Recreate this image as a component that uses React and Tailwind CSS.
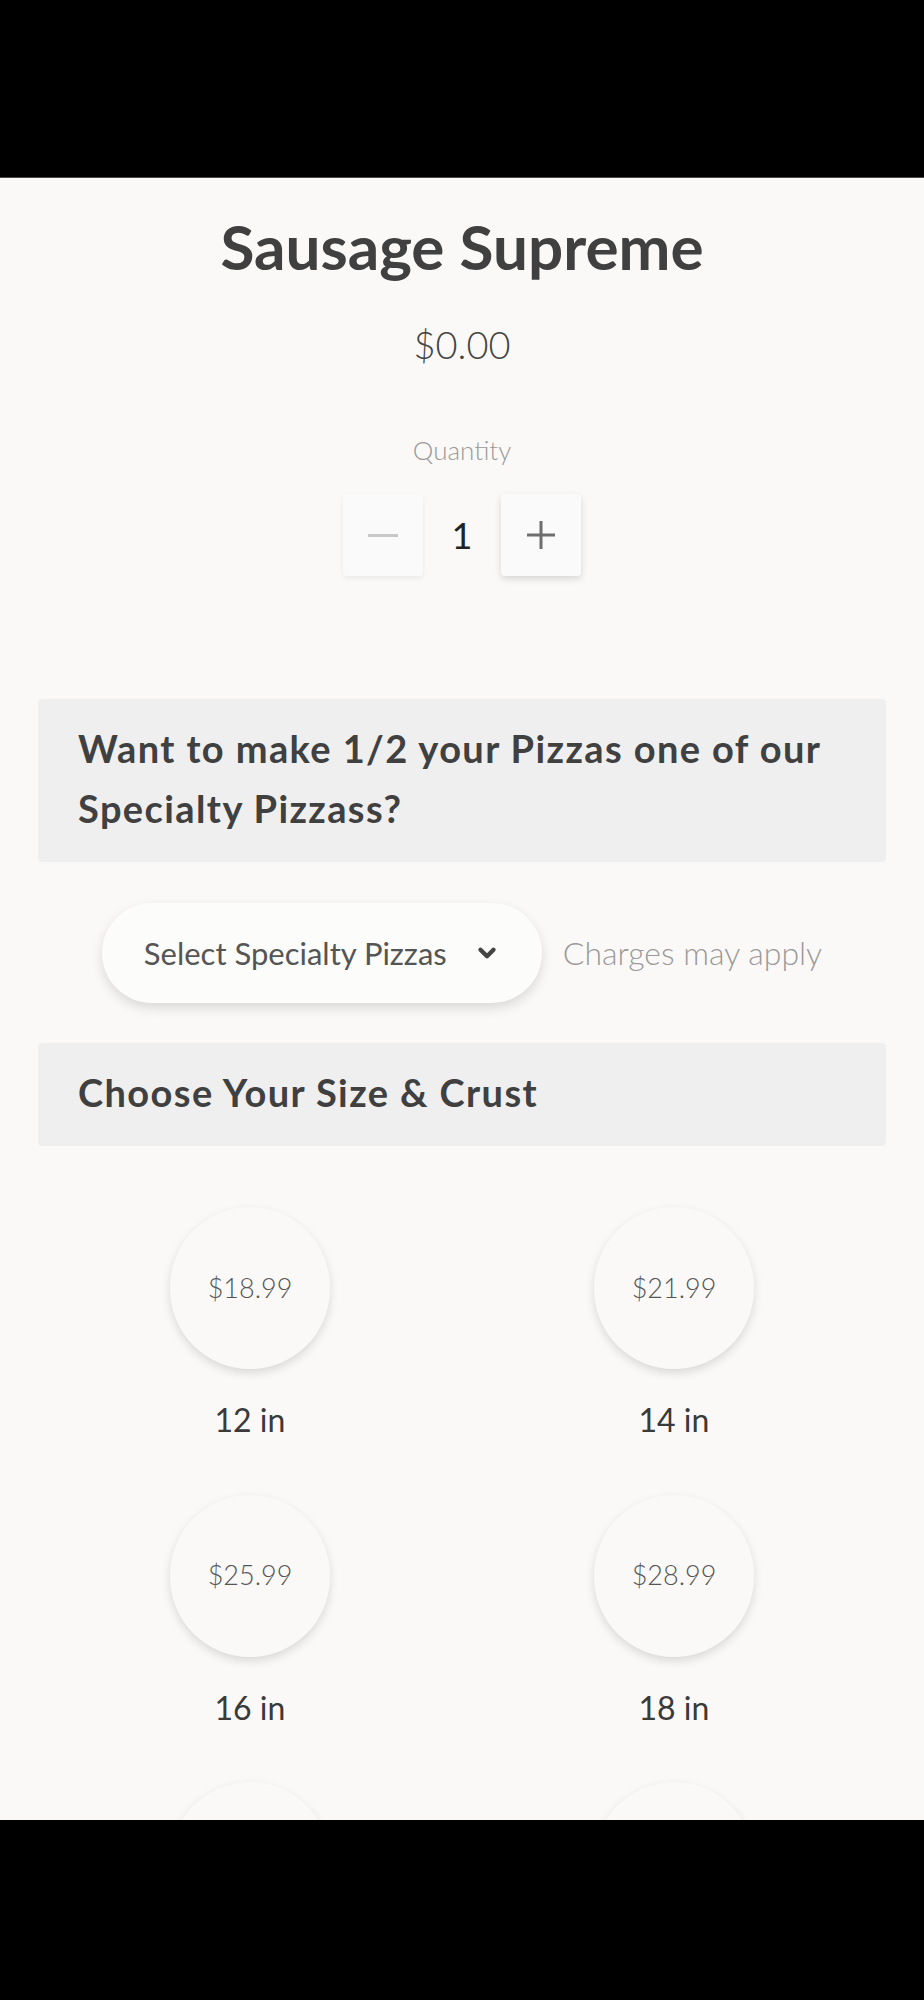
import { ChevronDown } from 'lucide-react';

const sizes = [
    { price: '$18.99', label: '12 in' },
    { price: '$21.99', label: '14 in' },
    { price: '$25.99', label: '16 in' },
    { price: '$28.99', label: '18 in' },
    { price: '$31.99', label: '20 in' },
    { price: '$34.99', label: '22 in' },
];

const SizeOption = ({ price, label }) => (
    <div className="flex flex-col items-center">
        <button className="w-[160px] h-[162px] rounded-full bg-[#faf9f8] shadow-[0_4px_10px_rgba(0,0,0,0.13)] flex items-center justify-center text-[27px] text-[#555] font-light">
            {price}
        </button>
        <span className="mt-[32px] text-[32px] leading-[1.2] text-[#3a3a3a]">{label}</span>
    </div>
);

const SectionHeader = ({ children }) => (
    <div className="bg-[#efefef] rounded-[4px] pl-[40px] pr-[20px] pt-[19px] pb-[24px]">
        <h2 className="text-[38px] leading-[60px] font-bold tracking-[1.4px] text-[#404040]">{children}</h2>
    </div>
);

const App = () => {
    return (
        <div className="w-[924px] h-[2000px] bg-black flex flex-col font-['Lato',sans-serif]">
            <div className="h-[178px] bg-black border-b border-[#4a4a4a]" />

            <main className="h-[1642px] overflow-hidden bg-[#faf9f8] px-[38px]">
                <h1 className="mt-[31px] text-center text-[62px] leading-[1.2] font-bold text-[#404040]">
                    Sausage Supreme
                </h1>
                <p className="mt-[39px] text-center text-[38px] leading-[1.2] font-light text-[#444]">$0.00</p>

                <p className="mt-[67px] text-center text-[26px] leading-[1.2] font-light text-[#9a9a9a]">Quantity</p>
                <div className="mt-[28px] flex justify-center items-center">
                    <button className="w-[80px] h-[82px] rounded-[4px] bg-[#fafafa] shadow-[0_2px_5px_rgba(0,0,0,0.07)] flex items-center justify-center">
                        <span className="block w-[30px] h-[3px] bg-[#c8c8c8]" />
                    </button>
                    <span className="w-[78px] text-center text-[36px] text-[#222]">1</span>
                    <button className="w-[80px] h-[82px] rounded-[4px] bg-[#fafafa] shadow-[0_3px_7px_rgba(0,0,0,0.14)] flex items-center justify-center">
                        <svg width="32" height="32" viewBox="0 0 32 32">
                            <path d="M16 2v28M2 16h28" stroke="#6e6e6e" strokeWidth="3" />
                        </svg>
                    </button>
                </div>

                <div className="mt-[123px]">
                    <SectionHeader>Want to make 1/2 your Pizzas one of our Specialty Pizzass?</SectionHeader>
                </div>

                <div className="mt-[41px] flex justify-center items-center gap-[21px]">
                    <button className="w-[440px] h-[100px] rounded-full bg-[#fcfcfb] shadow-[0_5px_12px_rgba(0,0,0,0.13)] flex items-center justify-between pl-[42px] pr-[42px]">
                        <span className="text-[31px] text-[#555]">Select Specialty Pizzas</span>
                        <ChevronDown className="w-[26px] h-[26px] text-[#444]" strokeWidth={4} />
                    </button>
                    <span className="text-[32px] text-[#9a9a9a] font-light">Charges may apply</span>
                </div>

                <div className="mt-[40px]">
                    <SectionHeader>Choose Your Size &amp; Crust</SectionHeader>
                </div>

                <div className="mt-[61px] grid grid-cols-2 gap-y-[55px]">
                    {sizes.map((s) => (
                        <SizeOption key={s.label} {...s} />
                    ))}
                </div>
            </main>

            <div className="flex-1 bg-black" />
        </div>
    );
};

export default App;
